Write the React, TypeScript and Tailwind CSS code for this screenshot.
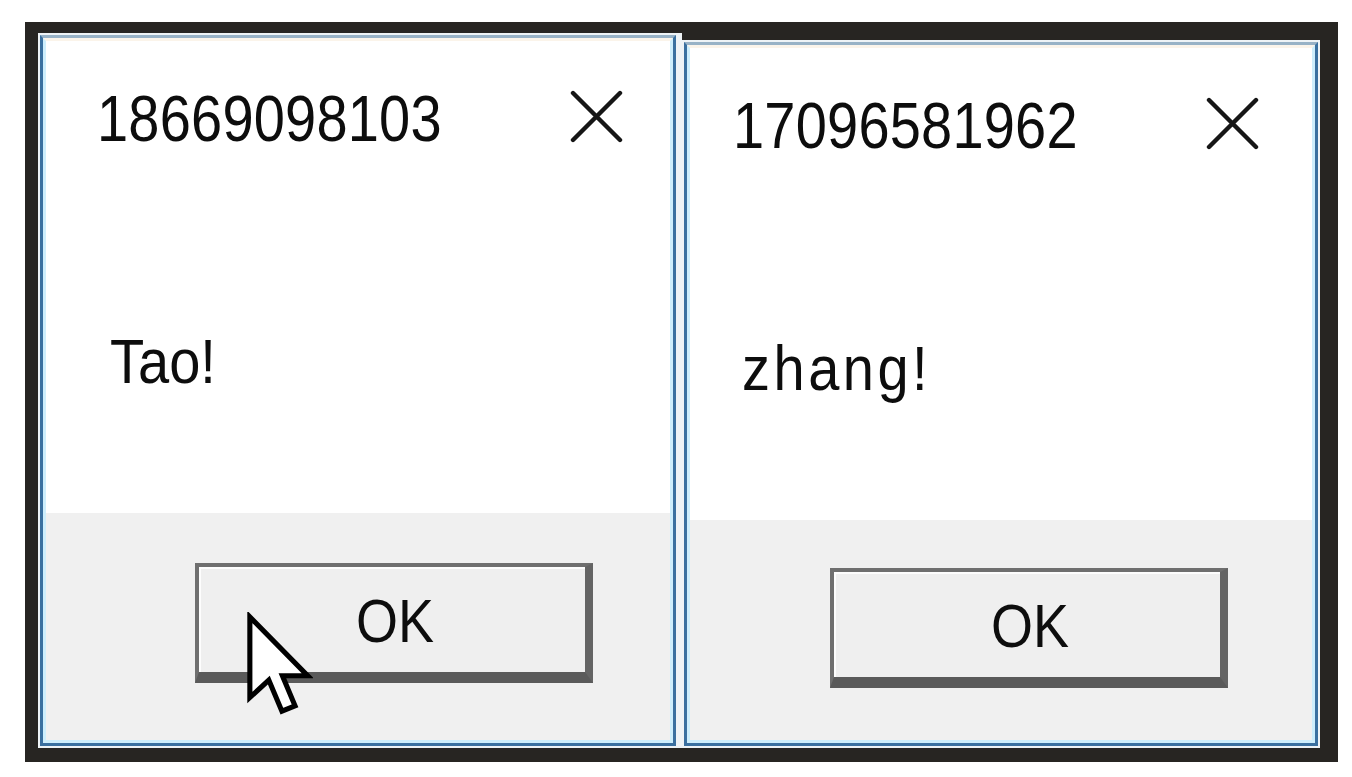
import { ReactNode } from "react";

const font = { fontFamily: '"Liberation Sans", Arial, sans-serif' };

function CloseIcon() {
  return (
    <svg width="53" height="53" viewBox="0 0 53 53" className="shrink-0">
      <path d="M3 3 L50 50 M50 3 L3 50" stroke="#161616" strokeWidth="4.4" strokeLinecap="round" />
    </svg>
  );
}

function Cursor() {
  return (
    <svg width="68" height="106" viewBox="0 0 14 21.8" className="absolute left-[205px] top-[577px]">
      <path
        d="M1 1 L1 17.6 L4.9 14 L7.6 20.4 L10.3 19.3 L7.7 13.1 L12.9 13.1 Z"
        fill="#ffffff"
        stroke="#000000"
        strokeWidth="1.05"
        strokeLinejoin="miter"
      />
    </svg>
  );
}

function OkButton({ left }: { left: string }) {
  return (
    <div className={left}>
      <div className="w-[398px] h-[120px] border-t-[4px] border-l-[4px] border-r-[8px] border-b-[11px] border-t-[#6f6f6f] border-l-[#6f6f6f] border-r-[#646464] border-b-[#5a5a5a] bg-[#efefef]">
        <div className="h-full border-t-2 border-l-2 border-white/90 flex items-center justify-center">
          <span className="text-[54px] leading-none text-[#0d0d0d] scale-y-[1.14] -mt-[2px] ml-[4px]" style={font}>
            OK
          </span>
        </div>
      </div>
    </div>
  );
}

function Dialog({
  title,
  titleLeft,
  closeLeft,
  message,
  messageClass,
  buttonLeft,
  className,
  children,
}: {
  title: string;
  titleLeft: string;
  closeLeft: string;
  message: string;
  messageClass: string;
  buttonLeft: string;
  className: string;
  children?: ReactNode;
}) {
  return (
    <div className={"relative border-2 border-[#eef3f6] " + className}>
      <div className="h-full border-[3px] border-[#3a70a0] border-t-[#98b2c6]">
        <div className="h-full border-[3px] border-[#cdeefc] border-t-[#fbf4ea] flex flex-col">
          <div className="h-[472px] bg-white flex flex-col">
            <div className="flex items-start pt-[50px]">
              <span
                className={"text-[56px] leading-none text-[#0d0d0d] scale-y-[1.16] tracking-[0.2px] " + titleLeft}
                style={font}
              >
                {title}
              </span>
              <div className={"-mt-[1px] " + closeLeft}>
                <CloseIcon />
              </div>
            </div>
            <span
              className={"mt-[187px] text-[56px] leading-none text-[#0d0d0d] scale-y-[1.12] origin-left self-start " + messageClass}
              style={font}
            >
              {message}
            </span>
          </div>
          <div className="flex-1 bg-[#f0f0f0]">
            <OkButton left={buttonLeft} />
          </div>
        </div>
      </div>
      {children}
    </div>
  );
}

export default function App() {
  return (
    <div className="min-h-screen bg-white pt-[22px] pl-[25px]">
      <div className="w-[1313px] h-[740px] bg-[#272522] flex items-start pl-[13px] pt-[11px]">
        <Dialog
          title="18669098103"
          titleLeft="ml-[51px]"
          closeLeft="ml-[128px]"
          message="Tao!"
          messageClass="ml-[64px]"
          buttonLeft="ml-[149px] mt-[50px]"
          className="w-[644px] h-[715px] border-r-[6px]"
        >
          <Cursor />
        </Dialog>
        <Dialog
          title="17096581962"
          titleLeft="ml-[43px]"
          closeLeft="ml-[128px]"
          message="zhang!"
          messageClass="ml-[52px] tracking-[3.5px]"
          buttonLeft="ml-[140px] mt-[48px]"
          className="w-[638px] h-[708px] mt-[7px]"
        />
      </div>
    </div>
  );
}
